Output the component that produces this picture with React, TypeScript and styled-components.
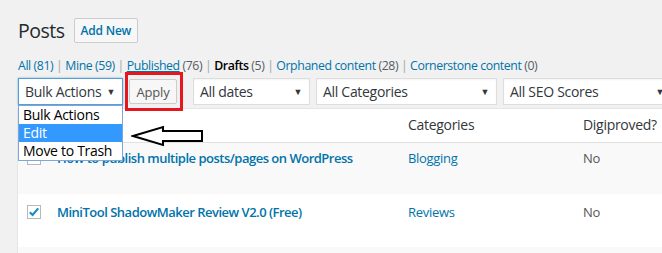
import React from "react";
import styled, { createGlobalStyle } from "styled-components";

const GlobalStyle = createGlobalStyle`
  html, body {
    margin: 0;
    padding: 0;
    overflow: hidden;
    background: #f1f1f1;
    font-family: "Open Sans", "Noto Sans", sans-serif;
    color: #32373c;
  }
`;

const Page = styled.div`
  position: relative;
  width: 740px;
  padding: 18px 0 0 17px;
`;

const Header = styled.div`
  display: flex;
  align-items: center;
  height: 25px;
  padding-left: 1px;
`;

const Title = styled.h1`
  margin: 0;
  font-size: 19.5px;
  font-weight: 400;
  letter-spacing: -0.5px;
  color: #23282d;
  line-height: 25px;
`;

const AddNew = styled.a`
  margin-left: 9px;
  display: inline-flex;
  align-items: center;
  height: 23px;
  padding: 0 6px;
  border: 1px solid #ccc;
  border-radius: 2px;
  background: #f7f7f7;
  color: #0073aa;
  font-size: 12px;
  font-weight: 600;
  letter-spacing: -0.2px;
`;

const Subsubsub = styled.ul`
  display: flex;
  margin: 13px 0 0 1px;
  padding: 0;
  list-style: none;
  font-size: 12.3px;
  line-height: 20px;
  letter-spacing: -0.4px;
`;

const SubItem = styled.li`
  white-space: pre;
  color: #a0a5aa;
`;

const SubLink = styled.a<{ $current?: boolean; $hover?: boolean }>`
  color: ${(p) => (p.$current ? "#000" : "#0073aa")};
  font-weight: ${(p) => (p.$current ? 600 : 400)};
  text-decoration: ${(p) => (p.$hover ? "underline" : "none")};
`;

const Count = styled.span<{ $blue?: boolean }>`
  color: ${(p) => (p.$blue ? "#0073aa" : "#555d66")};
`;

const Tablenav = styled.div`
  display: flex;
  align-items: center;
  gap: 6px;
  margin-top: 2px;
  height: 27px;
  padding-left: 1px;
`;

const Filters = styled.div`
  display: flex;
  gap: 6px;
  margin-left: 10px;
`;

const SelectWrap = styled.div`
  position: relative;
`;

const Select = styled.div<{ $w: number; $focus?: boolean }>`
  display: flex;
  align-items: center;
  justify-content: space-between;
  box-sizing: border-box;
  width: ${(p) => p.$w}px;
  height: 27px;
  padding: 0 7px 0 6px;
  background: #fff;
  border: 1px solid ${(p) => (p.$focus ? "#5b9dd9" : "#ddd")};
  box-shadow: ${(p) => (p.$focus ? "0 0 2px rgba(30,140,190,.6)" : "inset 0 1px 2px rgba(0,0,0,.05)")};
  font-size: 14px;
  letter-spacing: -0.3px;
  color: #32373c;
  white-space: nowrap;
`;

const Caret = styled.span`
  font-size: 9px;
  color: #32373c;
`;

const DropList = styled.ul`
  position: absolute;
  left: 0;
  top: 27px;
  z-index: 5;
  box-sizing: border-box;
  width: 105px;
  margin: 0;
  padding: 0;
  list-style: none;
  background: #fff;
  border: 1px solid #7ea6d8;
`;

const DropOption = styled.li<{ $selected?: boolean }>`
  height: 18px;
  line-height: 18px;
  padding-left: 4px;
  font-size: 14px;
  letter-spacing: -0.3px;
  color: ${(p) => (p.$selected ? "#fff" : "#000")};
  background: ${(p) => (p.$selected ? "#3399ff" : "transparent")};
`;

const ApplyButton = styled.button`
  box-sizing: border-box;
  height: 25px;
  width: 48px;
  padding: 0;
  border: 1px solid #ccc;
  border-radius: 2px;
  background: #f7f7f7;
  color: #555;
  font-family: inherit;
  font-size: 13px;
  letter-spacing: -0.2px;
`;

const RedBox = styled.div`
  position: absolute;
  left: 125px;
  top: 72px;
  width: 52px;
  height: 33px;
  border: 3px solid #e5161d;
  z-index: 4;
`;

const Arrow = styled.svg`
  position: absolute;
  left: 131px;
  top: 125px;
  z-index: 6;
`;

const Table = styled.div`
  margin-top: 3px;
  border: 1px solid #e5e5e5;
  border-right: none;
  background: #fff;
`;

const Row = styled.div<{ $alt?: boolean; $h: number; $head?: boolean }>`
  display: grid;
  grid-template-columns: 29px 351px 175px 1fr;
  height: ${(p) => p.$h}px;
  background: ${(p) => (p.$alt ? "#f9f9f9" : "#fff")};
  border-bottom: ${(p) => (p.$head ? "1px solid #e1e1e1" : "none")};
  font-size: 13px;
  letter-spacing: -0.3px;
`;

const CheckCell = styled.div<{ $top: number }>`
  padding: ${(p) => p.$top}px 0 0 9px;
`;

const Cell = styled.div<{ $top: number; $head?: boolean; $muted?: boolean }>`
  padding: ${(p) => p.$top}px 10px 0;
  font-size: ${(p) => (p.$head ? 14 : 13)}px;
  line-height: 20px;
  color: ${(p) => (p.$head ? "#32373c" : p.$muted ? "#555" : "#0073aa")};
  white-space: nowrap;
`;

const RowTitle = styled.a`
  color: #0073aa;
  font-size: 13px;
  font-weight: 600;
  letter-spacing: -0.5px;
`;

const Checkbox = styled.span`
  display: flex;
  align-items: center;
  justify-content: center;
  box-sizing: border-box;
  width: 14px;
  height: 14px;
  border: 1px solid #b4b9be;
  background: #fff;
`;

const Check = () => (
  <svg width="12" height="12" viewBox="0 0 12 12">
    <path d="M1.8 6.2 L4.6 9 L10.2 2.4" fill="none" stroke="#1e8cbe" strokeWidth="2.2" />
  </svg>
);

const views = [
  { label: "All", count: "(81)", blue: true },
  { label: "Mine", count: "(59)", blue: true },
  { label: "Published", count: "(76)", hover: true },
  { label: "Drafts", count: "(5)", current: true },
  { label: "Orphaned content", count: " (28)" },
  { label: "Cornerstone content", count: " (0)" },
];

const posts = [
  { title: "How to publish multiple posts/pages on WordPress", cat: "Blogging", h: 51, top: 5, alt: true, checked: false },
  { title: "MiniTool ShadowMaker Review V2.0 (Free)", cat: "Reviews", h: 53, top: 8, alt: false, checked: true },
];

export default function App() {
  return (
    <>
      <GlobalStyle />
      <Page>
        <Header>
          <Title>Posts</Title>
          <AddNew>Add New</AddNew>
        </Header>

        <Subsubsub>
          {views.map((v, i) => (
            <SubItem key={v.label}>
              <SubLink $current={v.current} $hover={v.hover}>
                {v.label}
              </SubLink>
              <Count $blue={v.blue}> {v.count.trim()}</Count>
              {i < views.length - 1 ? " | " : ""}
            </SubItem>
          ))}
        </Subsubsub>

        <Tablenav>
          <SelectWrap>
            <Select $w={105} $focus>
              Bulk Actions <Caret>▼</Caret>
            </Select>
            <DropList>
              <DropOption>Bulk Actions</DropOption>
              <DropOption $selected>Edit</DropOption>
              <DropOption>Move to Trash</DropOption>
            </DropList>
          </SelectWrap>
          <ApplyButton>Apply</ApplyButton>
          <Filters>
            <Select $w={117}>
              All dates <Caret>▼</Caret>
            </Select>
            <Select $w={181}>
              All Categories <Caret>▼</Caret>
            </Select>
            <Select $w={169}>
              All SEO Scores <Caret>▼</Caret>
            </Select>
          </Filters>
        </Tablenav>

        <RedBox />
        <Arrow width="74" height="22" viewBox="0 0 74 22">
          <polygon
            points="2,11 32,2 32,6 71,6 71,16 32,16 32,20"
            fill="#fff"
            stroke="#000"
            strokeWidth="2"
            strokeLinejoin="miter"
          />
        </Arrow>

        <Table>
          <Row $h={33} $head>
            <CheckCell $top={9}>
              <Checkbox />
            </CheckCell>
            <Cell $top={6} $head />
            <Cell $top={6} $head>Categories</Cell>
            <Cell $top={6} $head>Digiproved?</Cell>
          </Row>
          {posts.map((p) => (
            <Row key={p.title} $h={p.h} $alt={p.alt}>
              <CheckCell $top={p.top + 3}>
                <Checkbox>{p.checked && <Check />}</Checkbox>
              </CheckCell>
              <Cell $top={p.top}>
                <RowTitle>{p.title}</RowTitle>
              </Cell>
              <Cell $top={p.top}>{p.cat}</Cell>
              <Cell $top={p.top} $muted>No</Cell>
            </Row>
          ))}
          <Row $h={30} $alt />
        </Table>
      </Page>
    </>
  );
}
